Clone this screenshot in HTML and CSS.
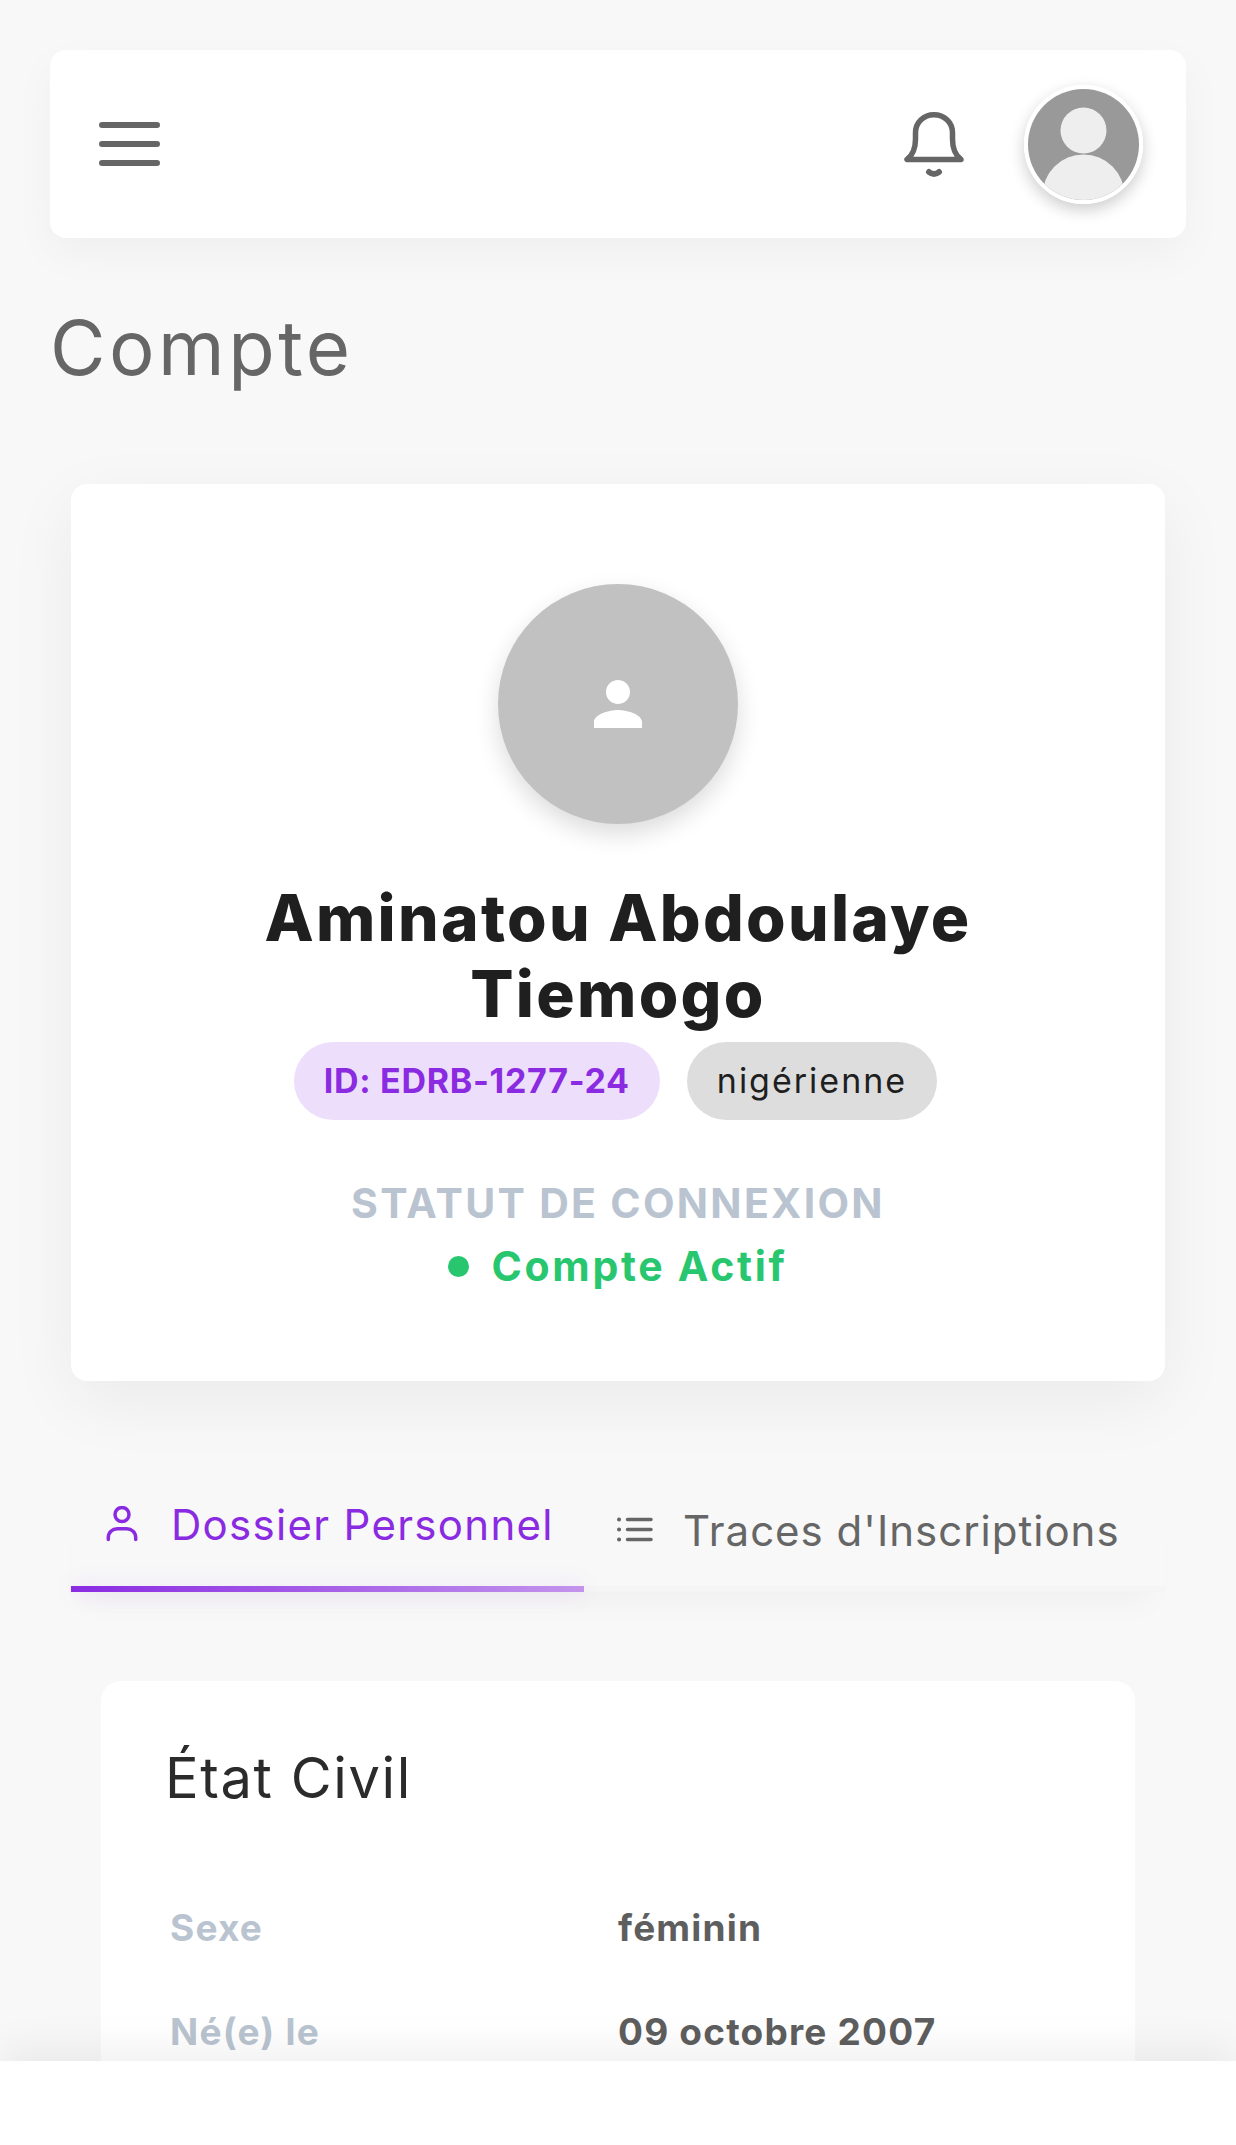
FILE: index.html
```html
<!DOCTYPE html>
<html lang="fr">
<head>
  <meta charset="UTF-8">
  <meta name="viewport" content="width=device-width, initial-scale=1.0">
  <title>Compte</title>
  <link rel="stylesheet" href="styles.css">
</head>
<body>
  <div class="page">
    <header class="topbar">
      <div class="burger"><span></span><span></span><span></span></div>
      <div class="topbar-right">
        <svg class="bell" viewBox="0 0 60 66" fill="none" stroke="#666" stroke-width="5.500" stroke-linecap="round" stroke-linejoin="round">
          <path d="M3 47.500H57C51 43 48.500 37 48.500 27V21C48.500 10 40 2.800 30 2.800S11.500 10 11.500 21V27C11.500 37 9 43 3 47.500z"/>
          <path d="M25 60q5 4 10 0" stroke-width="6"/>
        </svg>
        <div class="top-avatar">
          <svg viewBox="0 0 111 111">
            <rect width="111" height="111" fill="#999"/>
            <circle cx="55.500" cy="41.500" r="23" fill="#eee"/>
            <circle cx="55.500" cy="106.500" r="41" fill="#eee"/>
          </svg>
        </div>
      </div>
    </header>

    <h1 class="page-title">Compte</h1>

    <section class="profile-card">
      <div class="profile-avatar">
        <svg viewBox="0 0 24 24" width="72" height="72" fill="#fff">
          <path d="M12 12c2.210 0 4-1.790 4-4s-1.790-4-4-4-4 1.790-4 4 1.790 4 4 4zm0 2c-2.670 0-8 1.340-8 4v2h16v-2c0-2.660-5.330-4-8-4z"/>
        </svg>
      </div>
      <h2 class="profile-name">Aminatou Abdoulaye Tiemogo</h2>
      <div class="pills">
        <span class="pill pill-id">ID: EDRB-1277-24</span>
        <span class="pill pill-grey">nigérienne</span>
      </div>
      <div class="status-label">STATUT DE CONNEXION</div>
      <div class="status-value"><span class="dot"></span>Compte Actif</div>
    </section>

    <nav class="tabs">
      <a class="tab tab-active">
        <svg class="tab-icon" viewBox="0 0 32 36" fill="none" stroke="currentColor" stroke-width="3.500" stroke-linecap="round" stroke-linejoin="round">
          <circle cx="16" cy="8.500" r="7"/>
          <path d="M2.300 33.500v-2c0-5 4-8.800 9-8.800h9.400c5 0 9 3.800 9 8.800v2"/>
        </svg>
        Dossier Personnel
      </a>
      <a class="tab tab-off">
        <svg class="list-icon" viewBox="0 0 36 26" fill="none" stroke="currentColor" stroke-linecap="round">
          <path stroke-width="3.500" d="M10.500 2.500h23.500M10.500 12.500h23.500M10.500 22.500h23.500"/>
          <path stroke-width="4" d="M2 2.500h.1M2 12.500h.1M2 22.500h.1"/>
        </svg>
        Traces d'Inscriptions
      </a>
    </nav>

    <section class="info-card">
      <h3 class="info-title">État Civil</h3>
      <div class="info-row">
        <div class="info-label">Sexe</div>
        <div class="info-value">féminin</div>
      </div>
      <div class="info-row">
        <div class="info-label">Né(e) le</div>
        <div class="info-value">09 octobre 2007</div>
      </div>
    </section>
  </div>
  <div class="bottom-bar"></div>
</body>
</html>
```

FILE: styles.css
```css
* { box-sizing: border-box; }
html, body { margin: 0; height: 100%; overflow: hidden; }
body { font-family: Inter, "Noto Sans", sans-serif; background: #f8f8f8; color: #1f1f1f; }
.page { padding: 50px 50px 0; }

.topbar { height: 188px; background: #fff; border-radius: 16px; padding: 0 43px 0 49px; display: flex; justify-content: space-between; align-items: center; box-shadow: 0 16px 44px rgba(0,0,0,0.04); }
.burger { width: 61px; display: flex; flex-direction: column; gap: 13px; }
.burger span { height: 6px; background: #666; border-radius: 3px; }
.topbar-right { display: flex; align-items: center; gap: 60px; }
.bell { width: 60px; height: 66px; margin-top: 2px; }
.top-avatar { width: 119px; height: 119px; border-radius: 50%; border: 4px solid #fff; overflow: hidden; box-shadow: 0 6px 16px rgba(0,0,0,0.2); }
.top-avatar svg { display: block; width: 111px; height: 111px; }

.page-title { margin: 64px 0 0; font-size: 76px; line-height: 90px; font-weight: 400; letter-spacing: 3.500px; color: #666; }

.profile-card { margin: 92px 21px 0; height: 897px; background: #fff; border-radius: 16px; padding-top: 100px; text-align: center; box-shadow: 0 20px 70px rgba(0,0,0,0.06); }
.profile-avatar { width: 240px; height: 240px; margin: 0 auto; border-radius: 50%; background: #c1c1c1; display: flex; align-items: center; justify-content: center; box-shadow: 0 10px 24px rgba(0,0,0,0.14); }
.profile-name { margin: 56px auto 0; width: 800px; font-size: 64px; line-height: 76px; font-weight: 800; letter-spacing: 2.300px; color: #1f1f1f; }
.pills { margin-top: 10px; padding-right: 5px; display: flex; justify-content: center; gap: 27px; }
.pill { height: 78px; line-height: 78px; border-radius: 39px; padding: 0 30px; font-size: 34px; }
.pill-id { background: #eddffb; color: #8a2be2; font-weight: 700; letter-spacing: 0.700px; }
.pill-grey { background: #ddd; color: #1f1f1f; letter-spacing: 2px; }
.status-label { margin-top: 55px; font-size: 41px; line-height: 56px; font-weight: 700; letter-spacing: 2.300px; color: #b9c4d0; }
.status-value { margin-top: 7px; font-size: 41px; line-height: 56px; font-weight: 700; letter-spacing: 2.700px; color: #28c76f; display: flex; justify-content: center; align-items: center; }
.dot { width: 21px; height: 21px; border-radius: 50%; background: #28c76f; margin-right: 22px; }

.tabs { margin: 103px 21px 0; height: 108px; display: flex; background: linear-gradient(#f5f5f5, #f5f5f5) bottom / 100% 6px no-repeat; box-shadow: 0 26px 30px -14px rgba(0,0,0,0.03); }
.tab { display: flex; color: #666; font-size: 42px; letter-spacing: 1px; }
.tab-active { width: 513px; padding: 0 0 28px 35px; align-items: center; color: #8a2be2; letter-spacing: 1.300px; position: relative; }
.tab-active::after { content: ""; position: absolute; left: 0; right: 0; bottom: 0; height: 6px; background: linear-gradient(90deg, #8a2be2, #c394ec); box-shadow: 0 0 22px rgba(138,43,226,0.16); }
.tab-off { padding: 21px 0 0 33px; align-items: flex-start; line-height: 51px; }
.tab-icon { width: 32px; height: 36px; margin-right: 33px; flex: none; }
.list-icon { width: 36px; height: 26px; margin: 12px 30px 0 0; flex: none; }

.info-card { margin: 89px 51px 0; height: 440px; background: #fff; border-radius: 20px; padding: 62px 67px 0; }
.info-title { margin: 0 0 92px -3px; font-size: 56px; line-height: 70px; font-weight: 400; letter-spacing: 1.600px; color: #2b2b2b; }
.info-row { display: flex; height: 104px; font-size: 37px; font-weight: 700; letter-spacing: 1.200px; }
.info-label { width: 450px; padding-left: 2px; color: #b9c4d0; }
.info-value { color: #5e5e5e; }

.bottom-bar { position: fixed; left: 0; right: 0; bottom: 0; height: 84px; background: #fff; box-shadow: 0 -14px 40px rgba(0,0,0,0.06); }
```
